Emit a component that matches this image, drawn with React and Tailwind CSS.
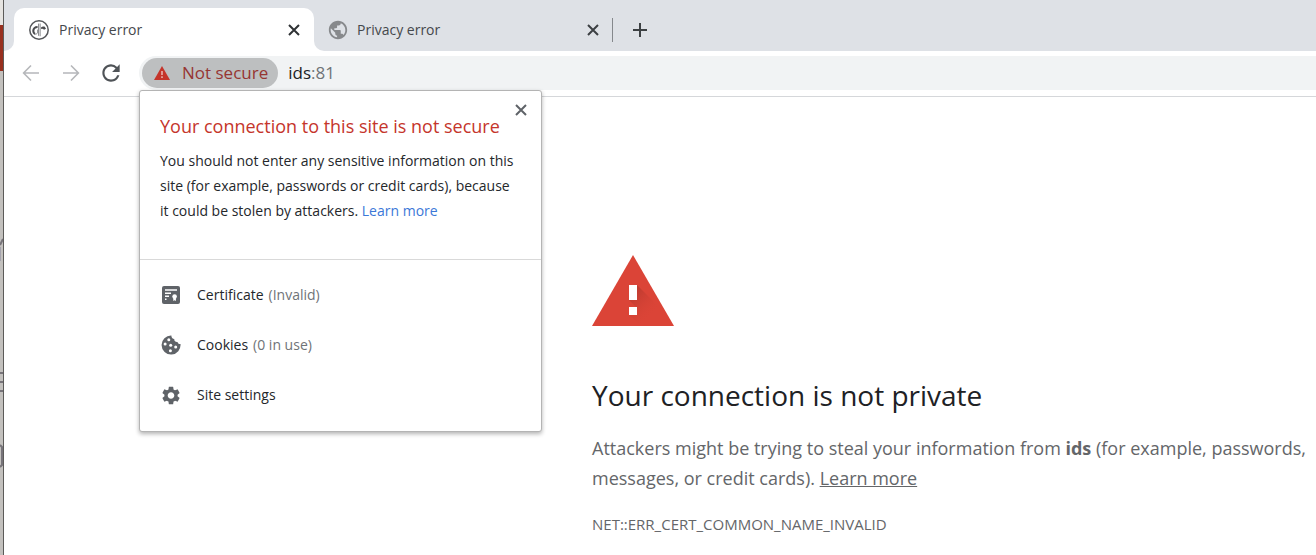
import React from 'react';
import { MdPublic, MdSettings, MdRefresh } from 'react-icons/md';

const CloseIcon = ({ className = '' }) => (
  <svg viewBox="0 0 12 12" fill="none" stroke="currentColor" strokeWidth={2} className={`h-3 w-3 ${className}`}>
    <path d="M1 1l10 10m0-10l-10 10" />
  </svg>
);

const ArrowIcon = ({ className = '' }) => (
  <svg viewBox="0 0 18 18" fill="none" stroke="currentColor" strokeWidth={1.6} className={`h-[18px] w-[18px] ${className}`}>
    <path d="M17 9H2M9 1.5L1.6 9L9 16.5" />
  </svg>
);

const SiteIcon = () => (
  <svg viewBox="0 0 20 20" fill="none" className="h-5 w-5">
    <circle cx="10" cy="10" r="9.2" stroke="#55575a" strokeWidth="1.5" />
    <path d="M8.6 7C5.8 7 4.300 8.700 4.300 11c0 1.4.7 2.500 1.700 3" stroke="#4a4b4e" strokeWidth="2.1" />
    <path d="M6 14.200c1.700.2 2.600-.9 2.600-2.200V9.6" stroke="#8b8d90" strokeWidth="1" />
    <path d="M9.600 3.600v12.200" stroke="#808285" strokeWidth="1" />
    <path d="M11.2 3.600v12.600" stroke="#b3b5b7" strokeWidth="1.6" />
    <path d="M12 7.600c1-1.200 2.500-1.400 3.800-.8l1.200 2-2 .9c-.8-1-1.800-1.100-3-.7z" fill="#4a4b4e" />
  </svg>
);

const CertificateIcon = () => (
  <svg viewBox="0 0 18 18" className="h-[18px] w-[18px]">
    <rect width="18" height="18" rx="2" fill="#5f6368" />
    <path d="M3 4h12M3 7.200h6M3 10.200h4M3 13.200h1.500" stroke="#fff" strokeWidth="1.4" />
    <circle cx="12.600" cy="10.600" r="2.300" fill="#fff" />
    <path d="M11.300 11.500h2.600V15l-1.300-.8-1.300.8z" fill="#fff" />
  </svg>
);

const CookieIcon = () => (
  <svg viewBox="0 0 20 20" className="h-5 w-5">
    <path
      d="M10.400.5A9.500 9.500 0 1 0 19.500 9c-1.600.2-2.700-.5-2.900-2-2.100.3-3.600-1-3.300-3-1.900-.2-3-1.600-2.900-3.500z"
      fill="#5f6368"
    />
    <g fill="#fff">
      <circle cx="7.800" cy="4.800" r="1.500" />
      <circle cx="4.100" cy="9" r="1.500" />
      <circle cx="9.700" cy="10.200" r="1.500" />
      <circle cx="14.700" cy="12" r="1.500" />
      <circle cx="9.400" cy="15.700" r="1.500" />
    </g>
  </svg>
);

const SmallWarningIcon = () => (
  <svg viewBox="0 0 16 14" className="h-[14px] w-4">
    <path d="M8 0l8 14H0z" fill="#c5342a" />
    <path d="M8 5v4M8 10.300v1.700" stroke="#e9b9b5" strokeWidth="1.500" />
  </svg>
);

const LargeWarningIcon = () => (
  <svg viewBox="0 0 82 71" className="h-[71px] w-[82px]">
    <defs>
      <linearGradient id="iconShadow" gradientUnits="userSpaceOnUse" x1="41" y1="38" x2="62" y2="59">
        <stop offset="0" stopColor="#b8392e" stopOpacity="0.8" />
        <stop offset="1" stopColor="#db4437" stopOpacity="0" />
      </linearGradient>
    </defs>
    <path d="M41 0l41 71H0z" fill="#db4437" />
    <path d="M45 30l37 37v4H49L37 60l8-7-8-8z" fill="url(#iconShadow)" />
    <path d="M37 30h8v15h-8zM37 52h8v8h-8z" fill="#fff" />
  </svg>
);

// Sliver of the window that sits behind the browser
const BackgroundWindow = () => (
  <div className="flex w-1 shrink-0 flex-col border-r border-[#5c5b59] bg-[#c3c1be]">
    <div className="h-[25px] bg-[#e6e4e1]" />
    <div className="h-[46px] bg-[#98301f]" />
    <svg viewBox="0 0 3 484" preserveAspectRatio="xMinYMin slice" className="h-[484px] w-full">
      <path d="M0 174l3-6M0 302h3M0 311h3M0 320h3M0 374l2 2v18l-2 2" fill="none" stroke="#77747a" strokeWidth="2" />
      <path d="M.5 176v14" stroke="#a5a3ad" />
    </svg>
  </div>
);

const permissions = [
  { label: 'Certificate', detail: '(Invalid)', icon: <CertificateIcon /> },
  { label: 'Cookies', detail: '(0 in use)', icon: <CookieIcon /> },
  { label: 'Site settings', detail: '', icon: <MdSettings size={23} /> },
];

const TabStrip = () => (
  <div className="flex h-[51px] items-end bg-[#dee1e6]">
    {/* Active tab, with the curved feet at both sides */}
    <div className="h-2.5 w-2.5 shrink-0 bg-white">
      <div className="h-full w-full rounded-br-[10px] bg-[#dee1e6]" />
    </div>
    <div className="flex h-[43px] w-[300px] shrink-0 items-center rounded-t-[10px] bg-white pl-[15px] pr-[14px]">
      <SiteIcon />
      <span className="ml-2.5 flex-1 text-sm text-[#45484c]">Privacy error</span>
      <button type="button" aria-label="Close tab" className="text-[#2f3235]">
        <CloseIcon />
      </button>
    </div>
    <div className="h-2.5 w-2.5 shrink-0 bg-white">
      <div className="h-full w-full rounded-bl-[10px] bg-[#dee1e6]" />
    </div>

    {/* Inactive tab */}
    <div className="flex h-[43px] w-[275px] shrink-0 items-center pl-[3px]">
      <MdPublic size={22} className="text-[#87898c]" />
      <span className="ml-2 flex-1 text-sm text-[#45484c]">Privacy error</span>
      <button type="button" aria-label="Close tab" className="text-[#3c4043]">
        <CloseIcon />
      </button>
    </div>
    <div className="flex h-[43px] items-center pl-[13px]">
      <div className="h-6 w-px bg-[#85888c]" />
      <button type="button" aria-label="New tab" className="ml-5 text-[#3c4043]">
        <svg viewBox="0 0 14 14" className="h-[14px] w-[14px]" fill="none" stroke="currentColor" strokeWidth={2}>
          <path d="M7 0v14M0 7h14" />
        </svg>
      </button>
    </div>
  </div>
);

const SecurityPopup = () => (
  <div
    role="dialog"
    aria-label="Site information"
    className="absolute left-0 top-full z-10 w-[403px] rounded-[3px] border border-[#b4b4b4] bg-white shadow-[0_2px_4px_rgba(0,0,0,0.3)]"
  >
    <button type="button" aria-label="Close" className="absolute right-3.5 top-[13px] text-[#5f6368]">
      <CloseIcon />
    </button>
    <div className="h-[168px] px-5 pt-5">
      <h2 className="text-lg leading-[30px] text-[#c5352b]">Your connection to this site is not secure</h2>
      <p className="mt-[7px] text-sm leading-[25px] text-[#24272b]">
        You should not enter any sensitive information on this site (for example, passwords or credit cards), because it
        could be stolen by attackers.{' '}
        <a href="#learn" className="text-[#3b78d8]">Learn more</a>
      </p>
    </div>
    <ul className="border-t border-[#d9d9d9] pb-[11px] pt-2.5">
      {permissions.map((item) => (
        <li key={item.label}>
          <button type="button" className="flex h-[50px] w-full items-center px-5 text-left text-sm">
            <span className="flex w-[22px] justify-center text-[#5f6368]">{item.icon}</span>
            <span className="ml-[15px] text-[#24272b]">{item.label}</span>
            <span className="ml-[5px] text-[#6f7377]">{item.detail}</span>
          </button>
        </li>
      ))}
    </ul>
  </div>
);

const Toolbar = () => (
  <div className="flex h-[46px] items-start border-b border-[#d5d7da] pt-[5px]">
    <div className="flex h-[34px] w-[135px] shrink-0 items-center gap-[22px] pl-[18px]">
      <button type="button" aria-label="Back" className="text-[#b5b7ba]">
        <ArrowIcon />
      </button>
      <button type="button" aria-label="Forward" className="text-[#b5b7ba]">
        <ArrowIcon className="rotate-180" />
      </button>
      <button type="button" aria-label="Reload" className="-m-1 text-[#4f5357]">
        <MdRefresh size={26} />
      </button>
    </div>
    <div className="relative flex h-[34px] flex-1 items-center rounded-l-full bg-[#f1f3f4] pl-[3px]">
      <button
        type="button"
        className="flex h-[30px] items-center gap-3 rounded-full bg-[#bdbfc0] pl-3 pr-2.5 text-[17px] text-[#963532]"
      >
        <SmallWarningIcon />
        Not secure
      </button>
      <div className="ml-2.5 text-[17px] text-[#202124]">
        ids<span className="text-[#6f7377]">:81</span>
      </div>
      <SecurityPopup />
    </div>
  </div>
);

const ErrorPage = () => (
  <main className="pb-2 pl-[588px] pr-2 pt-[158px] text-[#646669]">
    <LargeWarningIcon />
    <h1 className="mt-[49px] text-[28px] leading-10 text-[#202124]">Your connection is not private</h1>
    <p className="mt-[18px] text-lg leading-[30px]">
      Attackers might be trying to steal your information from <strong>ids</strong> (for example, passwords, messages,
      or credit cards).{' '}
      <a href="#learn" className="underline">Learn more</a>
    </p>
    <p className="mt-5 text-[15px] leading-[22px]">NET::ERR_CERT_COMMON_NAME_INVALID</p>
  </main>
);

const App = () => (
  <div className="flex min-h-screen bg-white font-['Open_Sans','Noto_Sans',sans-serif]">
    <BackgroundWindow />
    <div className="min-w-0 flex-1">
      <TabStrip />
      <Toolbar />
      <ErrorPage />
    </div>
  </div>
);

export default App;
